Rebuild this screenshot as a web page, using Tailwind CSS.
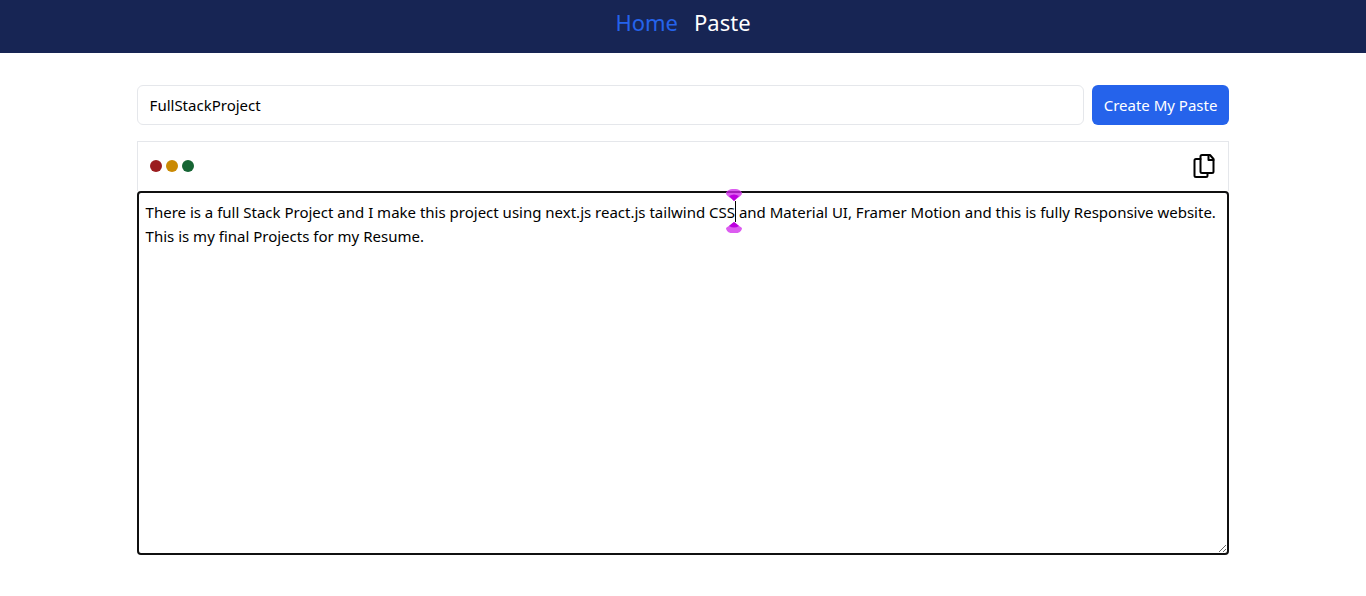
<!DOCTYPE html>
<html lang="en">
<head>
<meta charset="utf-8">
<meta name="viewport" content="width=device-width, initial-scale=1">
<title>Paste</title>
<script src="https://cdn.jsdelivr.net/npm/@tailwindcss/browser@4"></script>
</head>
<body class="bg-white text-[15px] leading-6 text-black font-['Segoe_UI','Noto_Sans',sans-serif]">
<nav class="flex h-[53px] justify-center gap-4 bg-[#172554] pt-[6px] text-[22px] leading-8">
  <a href="#home" class="text-[#2563eb]">Home</a>
  <a href="#paste" class="text-white">Paste</a>
</nav>
<main class="mx-auto mt-8 w-4/5">
  <form class="flex gap-2">
    <input type="text" aria-label="Title" value="FullStackProject" class="h-10 min-w-0 flex-1 rounded-md border border-gray-200 px-3">
    <button type="button" class="h-10 rounded-md bg-[#2563eb] px-3 whitespace-nowrap text-white">Create My Paste</button>
  </form>
  <section class="mt-4">
    <div class="flex h-[50px] items-center justify-between border border-b-0 border-gray-200 px-3 pb-[2px]">
      <div class="flex gap-1">
        <span class="size-3 rounded-full bg-[#9b1c1f]"></span>
        <span class="size-3 rounded-full bg-[#ca8a04]"></span>
        <span class="size-3 rounded-full bg-[#166534]"></span>
      </div>
      <button type="button" aria-label="Copy">
        <svg class="size-6" viewBox="0 0 24 24" fill="none" stroke="currentColor" stroke-width="2" stroke-linejoin="round" stroke-linecap="round">
          <path d="M16.500 1H10Q8.500 1 8.500 2.500V17.500Q8.500 19 10 19H20Q21.500 19 21.500 17.500V5L18 1Z"/>
          <path d="M16.500 1V6H21.500"/>
          <path d="M8.500 5H4Q2.500 5 2.500 6.500V21.500Q2.500 23 4 23H14Q15.500 23 15.500 21.500V19"/>
        </svg>
      </button>
    </div>
    <div class="relative">
      <textarea aria-label="Content" class="block h-[364px] w-full resize rounded border-2 border-[#101010] bg-white px-[7px] py-[7px]">There is a full Stack Project and I make this project using next.js react.js tailwind CSS and Material UI, Framer Motion and this is fully Responsive website.
This is my final Projects for my Resume.</textarea>
      <!-- Text cursor with its indicator -->
      <svg class="pointer-events-none absolute top-[-2px] left-[589px] h-11 w-4" viewBox="0 0 16 44">
        <path d="M0 5C0 2 3 0 8 0S16 2 16 5C14 8 11 9 8 12C5 9 2 8 0 5Z" fill="#dc5cf0"/>
        <path d="M3 7Q8 4 13 7Q11 9 8 12Q5 9 3 7Z" fill="#bd00df"/>
        <path d="M0 39C0 42 3 44.500 8 44.500S16 42 16 39C14 37 11 36 8 33C5 36 2 37 0 39Z" fill="#dc5cf0"/>
        <path d="M3 37Q8 40 13 37Q11 35 8 33Q5 35 3 37Z" fill="#bd00df"/>
        <path d="M1 3H15" stroke="#a31fb8" stroke-width="2"/>
        <path d="M9.500 12V33" stroke="#000" stroke-width="1"/>
      </svg>
    </div>
  </section>
</main>
</body>
</html>
